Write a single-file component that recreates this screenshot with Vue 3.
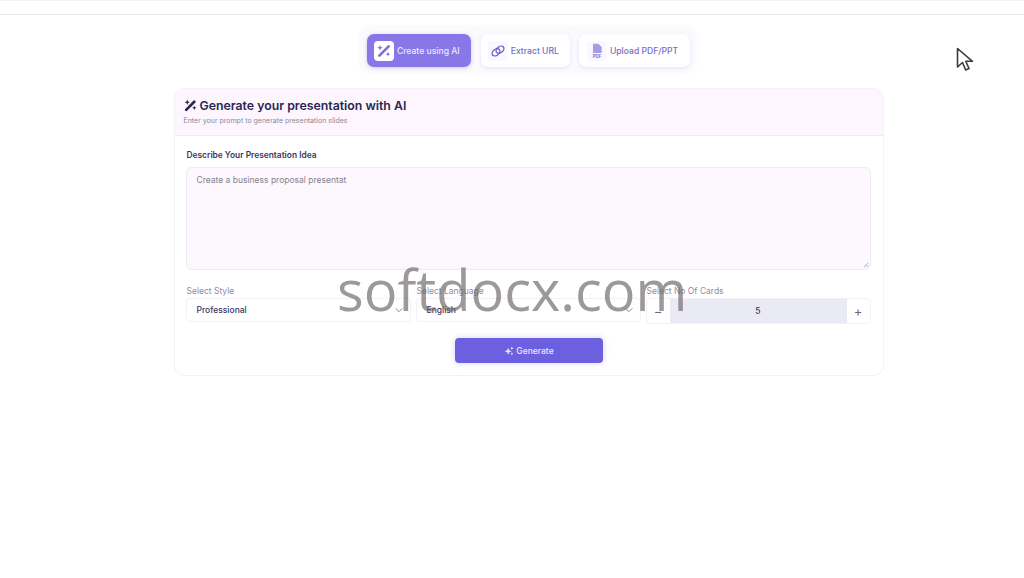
<template>
  <div class="screen">
    <header class="top-bar"></header>

    <main class="page">
      <nav class="tabs">
        <button
          v-for="tab in tabs"
          :key="tab.id"
          class="tab"
          :class="[`tab-${tab.id}`, { active: tab.id === 'ai' }]"
        >
          <span class="tab-icon">
            <svg v-if="tab.id === 'ai'" viewBox="0 0 24 24" class="wand">
              <path d="M5 19 19 5" stroke-width="4" stroke-linecap="round" />
              <path class="fill" d="M6 3l1.200 3 3 1.200-3 1.200L6 11.400 4.800 8.400l-3-1.200 3-1.200zM18 13l1 2.800 2.800 1-2.800 1-1 2.800-1-2.800-2.800-1 2.800-1z" />
            </svg>
            <svg v-else-if="tab.id === 'url'" viewBox="0 0 24 24" class="link">
              <ellipse cx="9" cy="14" rx="6.500" ry="4.500" transform="rotate(-38 9 14)" />
              <ellipse cx="15" cy="10" rx="6.500" ry="4.500" transform="rotate(-38 15 10)" />
            </svg>
            <svg v-else viewBox="0 0 24 24" class="pdf">
              <path class="fill" d="M6 1h8l5 5v9H6z" />
              <text x="12" y="22" text-anchor="middle">PDF</text>
            </svg>
          </span>
          {{ tab.label }}
        </button>
      </nav>

      <section class="card">
        <div class="card-head">
          <h1>
            <svg viewBox="0 0 24 24" class="head-wand">
              <path d="M4 20 19 5" stroke-width="5" stroke-linecap="round" />
              <path class="fill" d="M6 1l1.400 3.600L11 6 7.400 7.400 6 11 4.600 7.400 1 6l3.600-1.400zM19 12l1.200 3 3 1.200-3 1.200-1.200 3-1.200-3-3-1.200 3-1.200z" />
            </svg>
            Generate your presentation with AI
          </h1>
          <p>Enter your prompt to generate presentation slides</p>
        </div>

        <div class="card-body">
          <label class="idea-label">Describe Your Presentation Idea</label>
          <div class="idea-box">
            Create a business proposal presentat
            <svg class="grip" viewBox="0 0 8 8">
              <path d="M1 7 7 1M4.500 7 7 4.500" />
            </svg>
          </div>

          <div class="options">
            <div class="field">
              <label>Select Style</label>
              <div class="select">
                Professional
                <svg viewBox="0 0 12 12"><path d="M2 4l4 4 4-4" /></svg>
              </div>
            </div>
            <div class="field">
              <label>Select Language</label>
              <div class="select">
                English
                <svg viewBox="0 0 12 12"><path d="M2 4l4 4 4-4" /></svg>
              </div>
            </div>
            <div class="field">
              <label>Select No Of Cards</label>
              <div class="stepper">
                <span class="step">−</span>
                <span class="count">{{ cards }}</span>
                <span class="step">+</span>
              </div>
            </div>
          </div>

          <button class="generate">
            <svg viewBox="0 0 24 24">
              <path class="spark" d="M10 4l2.400 6 6 2.400-6 2.400-2.400 6-2.400-6-6-2.400 6-2.400zM19 1l1.200 3 3 1.200-3 1.200-1.200 3-1.200-3-3-1.200 3-1.200zM19 15l1 2.500 2.500 1-2.500 1-1 2.500-1-2.500-2.500-1 2.500-1z" />
            </svg>
            Generate
          </button>
        </div>
      </section>
    </main>

    <div class="watermark">softdocx.com</div>

    <svg class="pointer" viewBox="0 0 18 26">
      <path d="M1.500 1.500v18.500l5-4.500 3.200 7.500 3.300-1.500-3.200-7.200h6.700z" />
    </svg>
  </div>
</template>

<script setup>
import { ref } from 'vue'

const cards = ref(5)

const tabs = [
  { id: 'ai', label: 'Create using AI' },
  { id: 'url', label: 'Extract URL' },
  { id: 'pdf', label: 'Upload PDF/PPT' }
]
</script>

<style>
html,
body {
  margin: 0;
  background: #fff;
}
</style>

<style scoped>
.screen {
  position: relative;
  width: 1024px;
  height: 578px;
  overflow: hidden;
  background: #fff;
  font-family: Inter, "Liberation Sans", sans-serif;
  color: #2a2550;
}

.top-bar {
  height: 15px;
  box-sizing: border-box;
  border-top: 1px solid #f3f3f5;
  border-bottom: 1px solid #e9e9ec;
}

.page {
  display: flex;
  flex-direction: column;
  align-items: center;
  padding: 12px 0 0 33px;
}

.tabs {
  display: flex;
  gap: 9px;
  margin-right: 2px;
  padding: 7px 5px 5px 7px;
  border-radius: 10px;
  background: #fdfafe;
  box-shadow: 0 0 4px rgba(170, 140, 230, 0.12);
}

.tab {
  display: flex;
  align-items: center;
  gap: 3px;
  height: 33px;
  padding: 0 11px 0 7px;
  border: none;
  border-radius: 7px;
  background: #fff;
  box-shadow: 0 1px 4px rgba(120, 100, 200, 0.16);
  font-family: inherit;
  font-size: 8.600px;
  font-weight: 500;
  color: #7c6bd6;
}

.tab.active {
  margin-right: 1px;
  background: #8877e6;
  color: #ece9fc;
  box-shadow: 0 1px 4px rgba(120, 100, 220, 0.35);
}

.tab-url,
.tab-pdf {
  color: #7a6ac9;
}

.tab-pdf {
  padding: 0 12px 0 8px;
}

.tab-icon {
  display: flex;
  align-items: center;
  justify-content: center;
  width: 20px;
  height: 20px;
  border-radius: 4px;
  background: #faf7fe;
}

.tab.active .tab-icon {
  background: #fff;
}

.tab-icon svg {
  width: 16px;
  height: 16px;
}

.wand path {
  stroke: #7d6be2;
  fill: none;
}

.wand .fill {
  fill: #7d6be2;
  stroke: none;
}

.link ellipse {
  fill: none;
  stroke: #6a5cc4;
  stroke-width: 2;
}

.pdf .fill {
  fill: #a99ae6;
}

.pdf text {
  font-size: 6.500px;
  font-weight: 700;
  fill: #7566c8;
  font-family: Inter, sans-serif;
}

.card {
  width: 710px;
  height: 288px;
  margin-top: 16px;
  box-sizing: border-box;
  border: 1px solid #f5f1f8;
  border-radius: 10px;
  overflow: hidden;
  background: #fff;
}

.card-head {
  height: 47px;
  box-sizing: border-box;
  padding: 8px 9px 0;
  background: #fdf6fe;
  border-bottom: 1px solid #f0ebf3;
}

.card-head h1 {
  display: flex;
  align-items: center;
  gap: 3px;
  margin: 0;
  font-size: 12.300px;
  line-height: 17px;
  font-weight: 600;
  color: #2a2650;
}

.head-wand {
  width: 13px;
  height: 13px;
}

.head-wand path {
  stroke: #2a2650;
  fill: none;
}

.head-wand .fill {
  fill: #2a2650;
  stroke: none;
}

.card-head p {
  margin: 2px 0 0;
  font-size: 7px;
  line-height: 9px;
  color: #8a8799;
}

.card-body {
  display: flex;
  flex-direction: column;
  padding: 13px 12px 0 11px;
}

.idea-label {
  margin-left: 1px;
  font-size: 8.400px;
  line-height: 12px;
  font-weight: 600;
  color: #3b3663;
}

.idea-box {
  position: relative;
  height: 103px;
  margin-top: 6px;
  box-sizing: border-box;
  padding: 7px 10px;
  border: 1px solid #efe9f1;
  border-radius: 6px;
  background: #fdf7fe;
  font-size: 8.500px;
  line-height: 11px;
  color: #85828f;
}

.grip {
  position: absolute;
  right: 1px;
  bottom: 1px;
  width: 6px;
  height: 6px;
}

.grip path {
  fill: none;
  stroke: #9a97a3;
  stroke-width: 1;
}

.options {
  display: grid;
  grid-template-columns: 225px 225px 225px;
  gap: 5px;
  margin-top: 16px;
}

.field label {
  display: block;
  margin-left: 1px;
  font-size: 8.500px;
  line-height: 11px;
  color: #8f8ca6;
}

.select {
  display: flex;
  align-items: center;
  justify-content: space-between;
  height: 24px;
  margin-top: 1px;
  box-sizing: border-box;
  padding: 0 6px 0 10px;
  border: 1px solid #f3f1f6;
  border-radius: 4px;
  font-size: 8.500px;
  font-weight: 500;
  color: #3b3663;
}

.select svg {
  width: 10px;
  height: 10px;
}

.select svg path {
  fill: none;
  stroke: #8a8799;
  stroke-width: 1.200;
}

.stepper {
  display: flex;
  align-items: center;
  height: 26px;
  margin-top: 1px;
  box-sizing: border-box;
  border: 1px solid #f3f1f6;
  border-radius: 4px;
  overflow: hidden;
}

.step {
  width: 23px;
  text-align: center;
  font-size: 13px;
  color: #6a6875;
}

.count {
  flex: 1;
  align-self: stretch;
  display: flex;
  align-items: center;
  justify-content: center;
  background: #eaeaf4;
  font-size: 8.500px;
  font-weight: 500;
  color: #3a3850;
}

.generate {
  align-self: center;
  display: flex;
  align-items: center;
  justify-content: center;
  gap: 2px;
  width: 148px;
  height: 25px;
  margin: 14px 0 0 2px;
  border: none;
  border-radius: 4px;
  background: #6c60e0;
  box-shadow: 0 0 6px rgba(120, 100, 230, 0.3);
  font-family: inherit;
  font-size: 8.500px;
  font-weight: 500;
  color: #e9e7fb;
}

.generate svg {
  width: 10px;
  height: 10px;
}

.spark {
  fill: #e9e7fb;
}

.watermark {
  position: absolute;
  left: 337px;
  top: 254px;
  font-family: "Open Sans", "Noto Sans", sans-serif;
  font-size: 56px;
  line-height: 70px;
  color: rgba(110, 105, 105, 0.68);
  white-space: nowrap;
}

.pointer {
  position: absolute;
  left: 956px;
  top: 47px;
  width: 18px;
  height: 26px;
}

.pointer path {
  fill: #fff;
  stroke: #3c3c40;
  stroke-width: 1.600;
  stroke-linejoin: round;
}
</style>
